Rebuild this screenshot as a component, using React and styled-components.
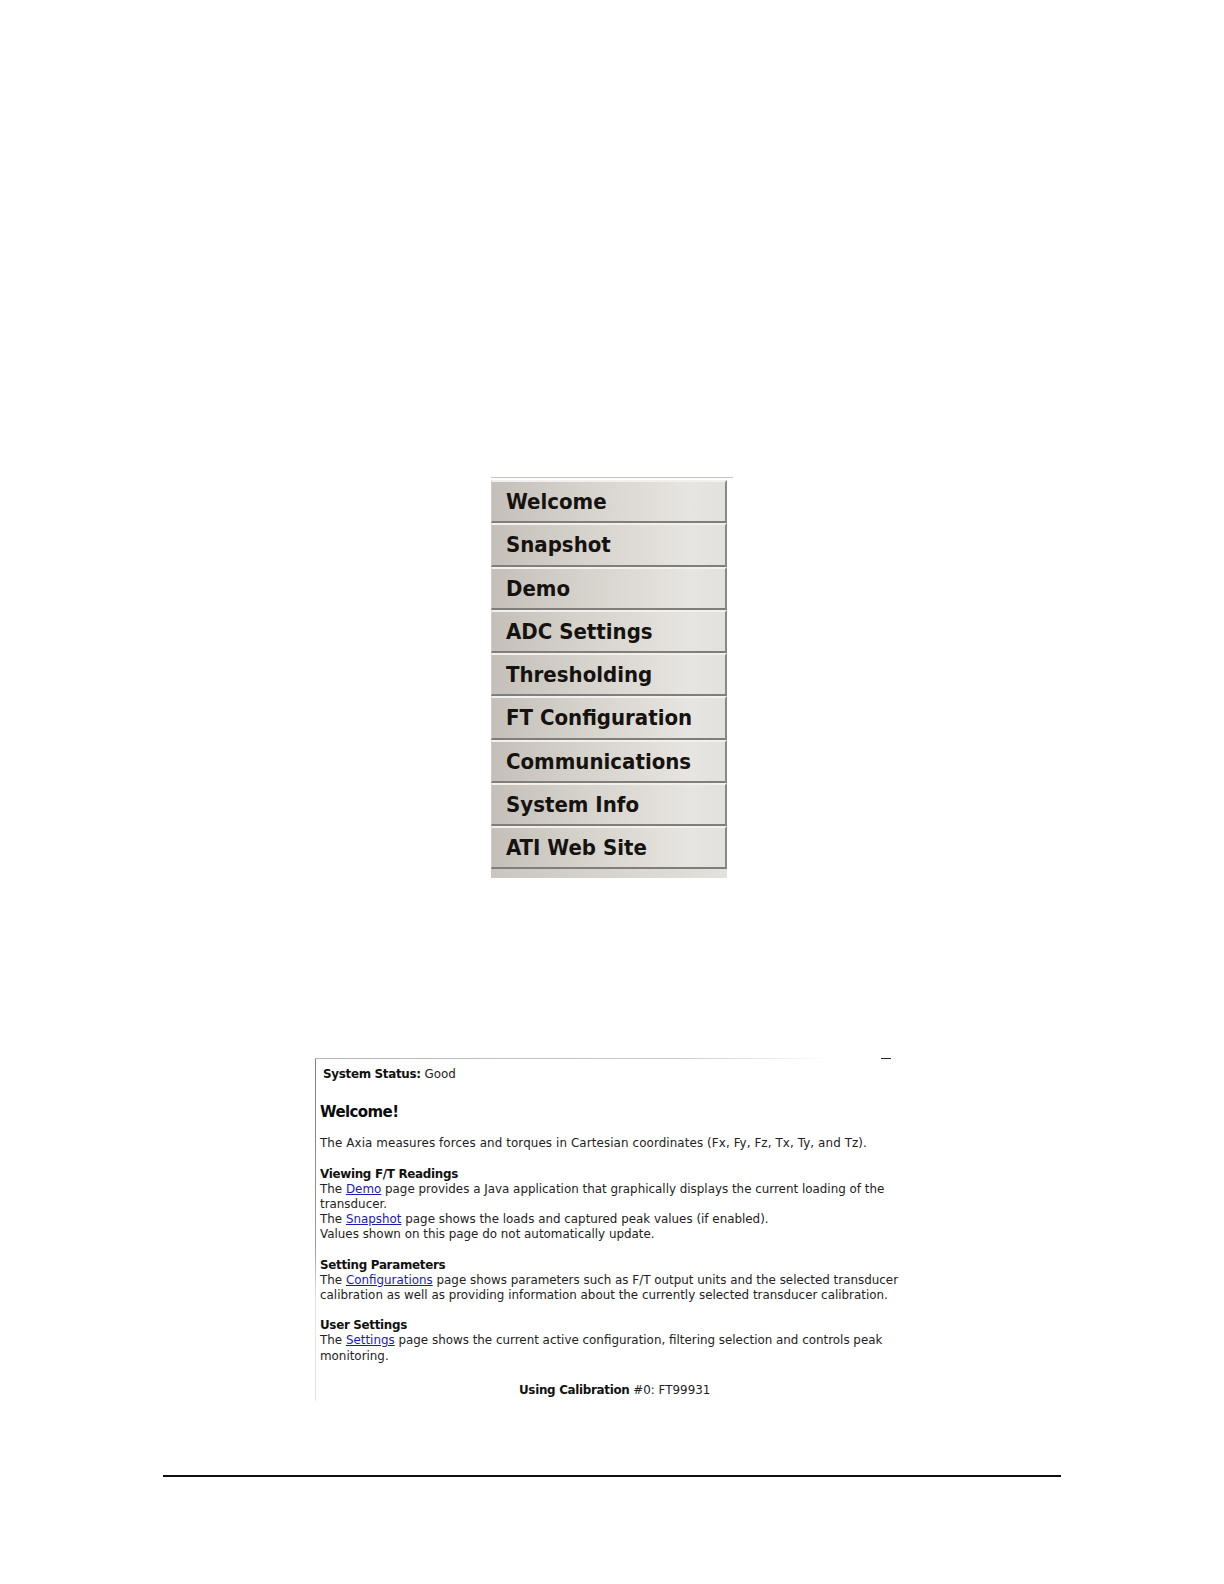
import React from 'react';
import styled, { createGlobalStyle } from 'styled-components';

const GlobalStyle = createGlobalStyle`
  html, body {
    margin: 0;
    padding: 0;
    background: #fff;
  }
`;

const Page = styled.div`
  width: 1224px;
  height: 1584px;
  box-sizing: border-box;
  padding-top: 477px;
  display: flex;
  flex-direction: column;
  overflow: hidden;
  font-family: 'DejaVu Sans', Verdana, sans-serif;
  color: #111;
`;

const MenuShot = styled.nav`
  width: 242px;
  margin-left: 491px;
  height: 401px;
  padding-top: 2px;
  border-top: 1px solid #c4c2bd;
  box-sizing: border-box;
  display: flex;
  flex-direction: column;
`;

const MenuItem = styled.a`
  display: flex;
  align-items: center;
  box-sizing: border-box;
  width: 236px;
  height: 43.25px;
  flex: none;
  padding: 0 0 0 14px;
  background: linear-gradient(90deg, #c4c0b9 0%, #d6d2cc 40%, #e7e5e1 85%, #e3e1dd 100%);
  border-top: 2px solid #f1f0ed;
  border-left: 1px solid #cfccc6;
  border-right: 2px solid #8b8985;
  border-bottom: 2px solid #7f7e7a;
  font-size: 22px;
  font-stretch: condensed;
  font-weight: 700;
  color: #15120f;
`;

const MenuFoot = styled.div`
  width: 236px;
  height: 9px;
  background: linear-gradient(90deg, #c9c6c0 0%, #e4e2de 100%);
`;

const StatusShot = styled.section`
  width: 590px;
  height: 343px;
  margin-top: 180px;
  margin-left: 315px;
  box-sizing: border-box;
  position: relative;
  background:
    linear-gradient(90deg, #b5b5b5, #c9c9c9 60%, #fff 88%) top / 100% 1px no-repeat,
    linear-gradient(#808080, #9a9a9a 55%, #e4e4e4 70%) left / 1px 100% no-repeat;
  padding: 9px 0 0 5px;
  font-size: 11.9px;
  line-height: 15.17px;
  white-space: nowrap;
`;

const Dash = styled.span`
  position: absolute;
  top: 0;
  left: 566px;
  width: 10px;
  height: 1px;
  background: #222;
`;

const Status = styled.div`
  padding-left: 3px;
  color: #222;
`;

const Strong = styled.b`
  font-weight: 700;
  letter-spacing: -0.3px;
  color: #111;
`;

const Heading = styled.h2`
  margin: 21px 0 0;
  font-size: 15px;
  line-height: 18px;
  font-weight: 700;
  letter-spacing: -0.6px;
  color: #0a0a0a;
`;

const Intro = styled.p`
  margin: 15px 0 14px;
  letter-spacing: 0.1px;
  color: #222;
`;

const Para = styled.p`
  margin: 15.17px 0 0;
  color: #222;
`;

const SubHeading = styled.span`
  display: block;
  font-weight: 700;
  letter-spacing: -0.3px;
  color: #111;
`;

const PageLink = styled.a`
  color: #1a1ab8;
  text-decoration: underline;
`;

const Calibration = styled.div`
  margin-top: 19px;
  padding-left: 199px;
  color: #222;
`;

const FooterRule = styled.hr`
  width: 898px;
  height: 2px;
  margin: 74px 0 0 163px;
  border: 0;
  background: #111;
  flex: none;
`;

const menuItems = [
  'Welcome',
  'Snapshot',
  'Demo',
  'ADC Settings',
  'Thresholding',
  'FT Configuration',
  'Communications',
  'System Info',
  'ATI Web Site',
];

export default function App() {
  return (
    <>
      <GlobalStyle />
      <Page>
        <MenuShot>
          {menuItems.map(item => (
            <MenuItem key={item}>{item}</MenuItem>
          ))}
          <MenuFoot />
        </MenuShot>

        <StatusShot>
          <Dash />
          <Status>
            <Strong>System Status:</Strong> Good
          </Status>
          <Heading>Welcome!</Heading>
          <Intro>
            The Axia measures forces and torques in Cartesian coordinates (Fx,
            Fy, Fz, Tx, Ty, and Tz).
          </Intro>
          <Para>
            <SubHeading>Viewing F/T Readings</SubHeading>
            The <PageLink>Demo</PageLink> page provides a Java application that
            graphically displays the current loading of the
            <br />
            transducer.
            <br />
            The <PageLink>Snapshot</PageLink> page shows the loads and captured
            peak values (if enabled).
            <br />
            Values shown on this page do not automatically update.
          </Para>
          <Para>
            <SubHeading>Setting Parameters</SubHeading>
            The <PageLink>Configurations</PageLink> page shows parameters such
            as F/T output units and the selected transducer
            <br />
            calibration as well as providing information about the currently
            selected transducer calibration.
          </Para>
          <Para>
            <SubHeading>User Settings</SubHeading>
            The <PageLink>Settings</PageLink> page shows the current active
            configuration, filtering selection and controls peak
            <br />
            monitoring.
          </Para>
          <Calibration>
            <Strong>Using Calibration</Strong> #0: FT99931
          </Calibration>
        </StatusShot>

        <FooterRule />
      </Page>
    </>
  );
}
